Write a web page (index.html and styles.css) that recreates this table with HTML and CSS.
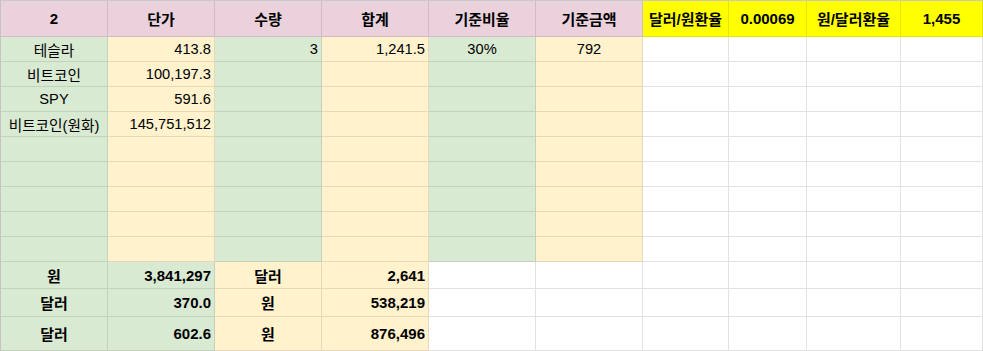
FILE: index.html
```html
<!DOCTYPE html>
<html lang="ko">
<head>
<meta charset="utf-8">
<link rel="stylesheet" href="styles.css">
</head>
<body>
<div class="sheet">
  <div class="c p h">2</div>
  <div class="c p h">단가</div>
  <div class="c p h">수량</div>
  <div class="c p h">합계</div>
  <div class="c p h">기준비율</div>
  <div class="c p h">기준금액</div>
  <div class="c Y hy">달러/원환율</div>
  <div class="c Y hy">0.00069</div>
  <div class="c Y hy">원/달러환율</div>
  <div class="c Y hy">1,455</div>

  <div class="c g">테슬라</div>
  <div class="c y r">413.8</div>
  <div class="c g r">3</div>
  <div class="c y r">1,241.5</div>
  <div class="c g">30%</div>
  <div class="c y">792</div>
  <div class="c w"></div><div class="c w"></div><div class="c w"></div><div class="c w"></div>

  <div class="c g">비트코인</div>
  <div class="c y r">100,197.3</div>
  <div class="c g"></div><div class="c y"></div><div class="c g"></div><div class="c y"></div>
  <div class="c w"></div><div class="c w"></div><div class="c w"></div><div class="c w"></div>

  <div class="c g">SPY</div>
  <div class="c y r">591.6</div>
  <div class="c g"></div><div class="c y"></div><div class="c g"></div><div class="c y"></div>
  <div class="c w"></div><div class="c w"></div><div class="c w"></div><div class="c w"></div>

  <div class="c g">비트코인(원화)</div>
  <div class="c y r">145,751,512</div>
  <div class="c g"></div><div class="c y"></div><div class="c g"></div><div class="c y"></div>
  <div class="c w"></div><div class="c w"></div><div class="c w"></div><div class="c w"></div>

  <div class="c g"></div><div class="c y"></div><div class="c g"></div><div class="c y"></div><div class="c g"></div><div class="c y"></div>
  <div class="c w"></div><div class="c w"></div><div class="c w"></div><div class="c w"></div>
  <div class="c g"></div><div class="c y"></div><div class="c g"></div><div class="c y"></div><div class="c g"></div><div class="c y"></div>
  <div class="c w"></div><div class="c w"></div><div class="c w"></div><div class="c w"></div>
  <div class="c g"></div><div class="c y"></div><div class="c g"></div><div class="c y"></div><div class="c g"></div><div class="c y"></div>
  <div class="c w"></div><div class="c w"></div><div class="c w"></div><div class="c w"></div>
  <div class="c g"></div><div class="c y"></div><div class="c g"></div><div class="c y"></div><div class="c g"></div><div class="c y"></div>
  <div class="c w"></div><div class="c w"></div><div class="c w"></div><div class="c w"></div>
  <div class="c g"></div><div class="c y"></div><div class="c g"></div><div class="c y"></div><div class="c g"></div><div class="c y"></div>
  <div class="c w"></div><div class="c w"></div><div class="c w"></div><div class="c w"></div>

  <div class="c g b">원</div>
  <div class="c g b r">3,841,297</div>
  <div class="c y b">달러</div>
  <div class="c y b r">2,641</div>
  <div class="c w"></div><div class="c w"></div><div class="c w"></div><div class="c w"></div><div class="c w"></div><div class="c w"></div>

  <div class="c g b">달러</div>
  <div class="c g b r">370.0</div>
  <div class="c y b">원</div>
  <div class="c y b r">538,219</div>
  <div class="c w"></div><div class="c w"></div><div class="c w"></div><div class="c w"></div><div class="c w"></div><div class="c w"></div>

  <div class="c g b">달러</div>
  <div class="c g b r">602.6</div>
  <div class="c y b">원</div>
  <div class="c y b r">876,496</div>
  <div class="c w"></div><div class="c w"></div><div class="c w"></div><div class="c w"></div><div class="c w"></div><div class="c w"></div>
</div>
</body>
</html>
```
FILE: styles.css
```css
html, body {
  margin: 0;
  padding: 0;
  background: #ffffff;
}

body {
  font-family: "Liberation Sans", "Noto Sans CJK KR", sans-serif;
  font-size: 14.67px;
  color: #000000;
}

.sheet {
  display: grid;
  grid-template-columns: 107px 107px 107px 107px 107px 107px 86px 78px 94px 82px;
  grid-template-rows: 36px repeat(9, 25px) 27px 28px 34px;
  border-left: 1px solid #c4c4c4;
  border-top: 1px solid #c9c9c9;
  width: max-content;
}

.c {
  box-sizing: border-box;
  border-right: 1px solid rgba(0, 0, 0, 0.1);
  border-bottom: 1px solid rgba(0, 0, 0, 0.1);
  display: flex;
  align-items: center;
  justify-content: center;
  padding: 0 3px;
  white-space: nowrap;
  overflow: hidden;
}

.p { background: #ead1dc; }
.Y { background: #ffff00; }
.g { background: #d9ead3; }
.y { background: #fff2cc; }
.w { background: #ffffff; border-color: #e1e1e1; }

.h {
  font-weight: bold;
  font-size: 15px;
}

.hy {
  font-weight: bold;
  font-size: 15px;
}

.r { justify-content: flex-end; }
.b {
  font-weight: bold;
  font-size: 15px;
}
```
